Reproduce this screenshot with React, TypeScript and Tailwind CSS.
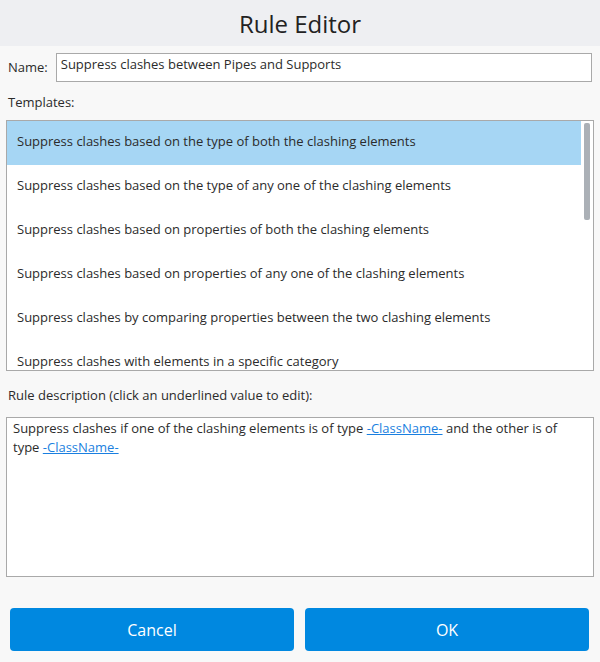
const templates = [
  "Suppress clashes based on the type of both the clashing elements",
  "Suppress clashes based on the type of any one of the clashing elements",
  "Suppress clashes based on properties of both the clashing elements",
  "Suppress clashes based on properties of any one of the clashing elements",
  "Suppress clashes by comparing properties between the two clashing elements",
  "Suppress clashes with elements in a specific category",
];

export default function App() {
  return (
    <main
      className="w-[600px] h-[662px] bg-[#f8f8f8] flex flex-col text-[#2b2b2b]"
      style={{ fontFamily: '"Open Sans", "Noto Sans", sans-serif' }}
    >
      <header className="h-[46px] bg-[#eeeff2] flex items-center justify-center">
        <h1 className="text-[24px] text-[#222] pt-[1px]">Rule Editor</h1>
      </header>

      <div className="flex items-center px-[8px] pt-[7px] gap-[8px]">
        <span className="text-[13px]">Name:</span>
        <div className="flex-1 h-[29px] border border-[#a9a9a9] bg-white pl-[4px] text-[13px] leading-[20px]">
          Suppress clashes between Pipes and Supports
        </div>
      </div>

      <div className="px-[8px] pt-[11px] text-[13px]">Templates:</div>

      <div className="mx-[6px] mt-[7px] h-[251px] border border-[#a9a9a9] bg-white flex overflow-hidden">
        <ul className="flex-1">
          {templates.map((t, i) => (
            <li
              key={t}
              className={
                "h-[44px] flex items-center px-[10px] pb-[1px] text-[13px] " +
                (i === 0 ? "bg-[#a6d6f4]" : "")
              }
            >
              {t}
            </li>
          ))}
        </ul>
        <div className="w-[12px] pt-[2px] flex justify-center">
          <div className="w-[6px] h-[97px] rounded-[2px] bg-[#abb0b6]" />
        </div>
      </div>

      <div className="px-[8px] pt-[15px] text-[13px]">
        Rule description (click an underlined value to edit):
      </div>

      <div className="mx-[6px] mt-[12px] h-[160px] border border-[#a9a9a9] bg-white pl-[6px] pr-[24px] py-[1px] text-[13px] leading-[19px]">
        Suppress clashes if one of the clashing elements is of type{" "}
        <a className="text-[#1a7fe0] underline">-ClassName-</a> and the other is of type{" "}
        <a className="text-[#1a7fe0] underline">-ClassName-</a>
      </div>

      <div className="flex gap-[11px] pl-[10px] pr-[11px] mt-[31px]">
        <button className="flex-1 h-[43px] rounded-[4px] bg-[#0088e0] text-white text-[16px]">
          Cancel
        </button>
        <button className="flex-1 h-[43px] rounded-[4px] bg-[#0088e0] text-white text-[16px]">
          OK
        </button>
      </div>
    </main>
  );
}
